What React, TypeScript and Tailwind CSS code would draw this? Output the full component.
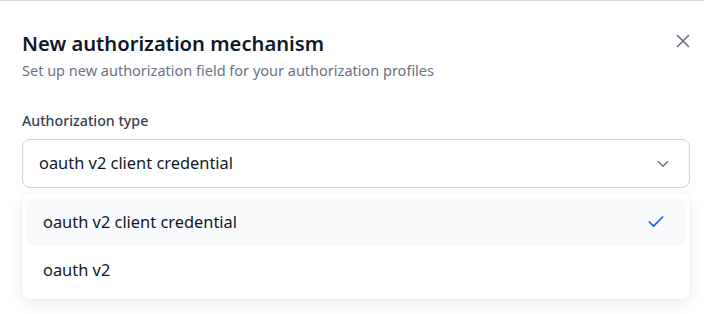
import { X, ChevronDown, Check } from "lucide-react";

const options = ["oauth v2 client credential", "oauth v2"];

export default function App() {
  const selected = options[0];

  return (
    <div
      className="h-[314px] w-[704px] overflow-hidden border-t border-gray-300 bg-white"
      style={{ fontFamily: '"Noto Sans", "Open Sans", sans-serif' }}
    >
      <div className="relative pl-[22px] pr-[14px] pt-[28px]">
        <button className="absolute right-[10px] top-[29px] text-gray-500">
          <X size={22} strokeWidth={1.75} />
        </button>
        <h1 className="text-[20.2px] font-semibold leading-7 text-gray-900">
          New authorization mechanism
        </h1>
        <p className="mt-[3px] text-[14.5px] leading-5 text-gray-500">
          Set up new authorization field for your authorization profiles
        </p>

        <label className="mt-[31px] block text-[14.2px] font-medium leading-5 text-gray-700">
          Authorization type
        </label>
        <div className="mt-[8px] flex h-[49px] items-center justify-between rounded-lg border border-gray-300 pl-[16px] pr-[17px]">
          <span className="text-[16.4px] text-gray-900">{selected}</span>
          <ChevronDown size={18} strokeWidth={2} className="text-gray-500" />
        </div>

        <ul className="mt-[5px] rounded-lg bg-white p-[5px] shadow-[0_5px_14px_rgba(0,0,0,0.08),0_0_0_1px_rgba(0,0,0,0.025)]">
          {options.map((o) => (
            <li
              key={o}
              className={
                o === selected
                  ? "flex h-[48px] items-center justify-between rounded-lg bg-gray-50 pl-[16px] pr-[19px]"
                  : "flex h-[48px] items-center justify-between rounded-lg pl-[16px] pr-[19px]"
              }
            >
              <span className="text-[16.4px] text-gray-900">{o}</span>
              {o === selected && (
                <Check size={20} strokeWidth={2} className="text-blue-600" />
              )}
            </li>
          ))}
        </ul>
      </div>
    </div>
  );
}
